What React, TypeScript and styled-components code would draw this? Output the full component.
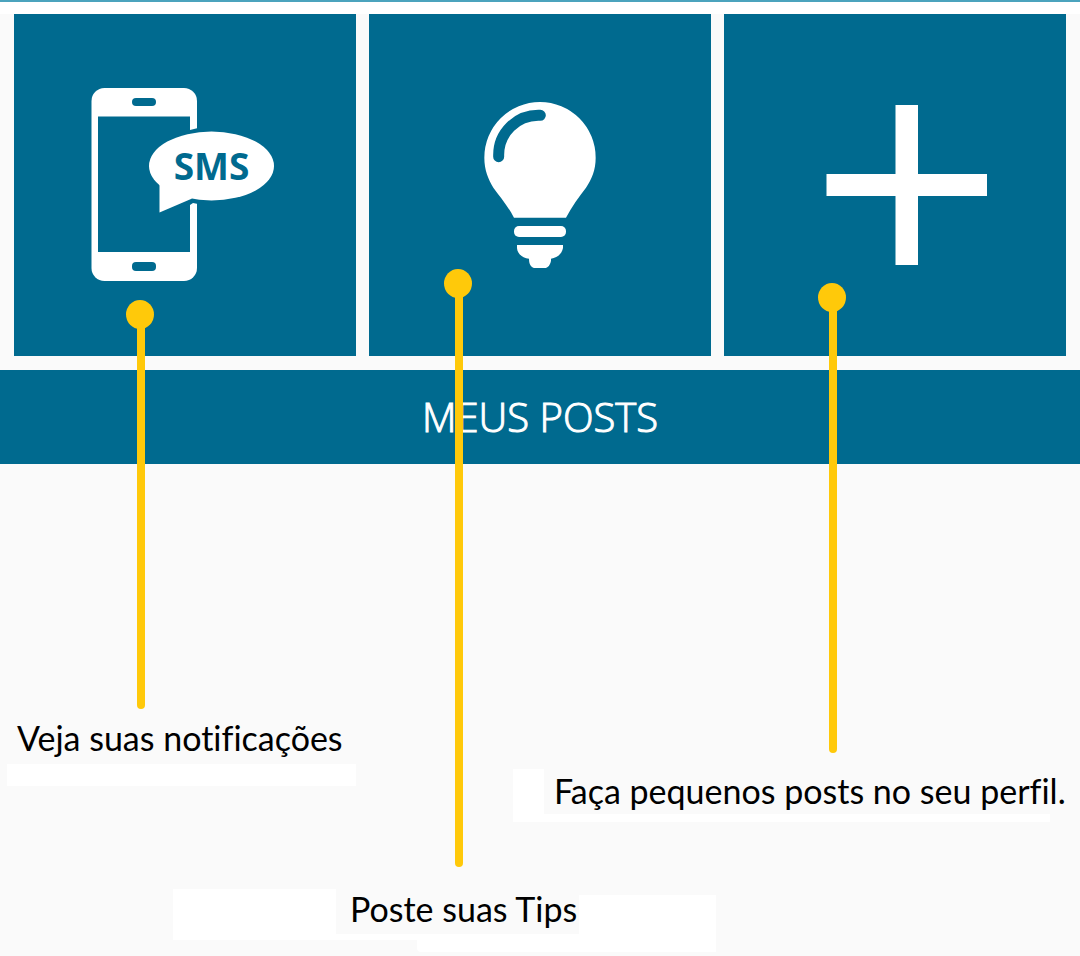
import React from "react";
import styled, { createGlobalStyle } from "styled-components";

const teal = "#006a8f";
const gold = "#ffc90a";
const paper = "#fafafa";

const GlobalStyle = createGlobalStyle`
  * { box-sizing: border-box; }
  body {
    margin: 0;
    background: ${paper};
    color: #000;
    font-family: Lato, "Liberation Sans", sans-serif;
  }
`;

const Page = styled.main`
  overflow: hidden;
`;

const TopEdge = styled.div`
  height: 14px;
  border-top: 2px solid #4ba3bd;
  background: #fff;
`;

const Tiles = styled.ul`
  display: grid;
  grid-template-columns: repeat(3, 1fr);
  gap: 13px;
  margin: 0;
  padding: 0 14px 14px;
  list-style: none;
`;

const TileItem = styled.li`
  position: relative;
`;

const TileButton = styled.button`
  display: block;
  width: 100%;
  aspect-ratio: 1;
  padding: 0;
  border: 0;
  background: ${teal};
  color: #fff;
  cursor: pointer;
`;

const TileArt = styled.svg`
  display: block;
  width: 100%;
  height: 100%;
`;

const Pin = styled.span<{ $left: number; $top: number; $length: number }>`
  position: absolute;
  z-index: 1;
  left: ${(p) => p.$left}px;
  top: ${(p) => p.$top}px;
  width: 28px;
  height: ${(p) => p.$length}px;
  pointer-events: none;

  &::before {
    content: "";
    display: block;
    height: 29px;
    border-radius: 50%;
    background: ${gold};
  }

  &::after {
    content: "";
    display: block;
    width: 8px;
    height: calc(100% - 25px);
    margin: -4px 0 0 11px;
    border-radius: 0 0 4px 4px;
    background: ${gold};
  }
`;

const Band = styled.h2`
  display: flex;
  align-items: center;
  justify-content: center;
  height: 94px;
  margin: 0;
  background: ${teal};
  color: #fff;
  font-family: "Open Sans", "Noto Sans", sans-serif;
  font-size: 40px;
  font-weight: 300;
  line-height: 48px;
  -webkit-text-stroke: 1px #fff;
`;

const Notes = styled.section`
  padding: 252px 16px 4px 7px;
`;

const NoteRow = styled.div`
  display: flex;
  justify-content: space-between;
  align-items: flex-start;
`;

const NoteText = styled.p`
  margin: 0;
  padding-bottom: 2px;
  font-size: 34px;
  font-variant-ligatures: none;
  line-height: 43px;
  white-space: nowrap;
`;

const FirstNote = styled.div`
  width: 349px;
  border-bottom: 22px solid #fff;

  ${NoteText} {
    padding: 0 0 5px 10px;
  }
`;

const PostNote = styled.div`
  width: 551px;
  margin-top: 53px;
  padding-right: 14px;
`;

const PostPatch = styled.div`
  padding: 0 0 8px 31px;
  background: #fff;

  ${NoteText} {
    padding-left: 10px;
    background: ${paper};
  }
`;

const TipsNote = styled.div`
  display: grid;
  grid-template-columns: 163px 243px 137px;
  width: 543px;
  margin: 67px 0 0 166px;
`;

const LeftPatch = styled.div`
  height: 51px;
  background: #fff;
`;

const RightPatch = styled.div`
  height: 57px;
  margin-top: 6px;
  background: #fff;
`;

const TipsText = styled.div`
  ${NoteText} {
    padding: 0 0 6px 14px;
    line-height: 39px;
  }
`;

const PatchSteps = styled.div`
  display: flex;
  align-items: flex-start;

  &::before {
    content: "";
    width: 81px;
    height: 6px;
    background: #fff;
  }

  &::after {
    content: "";
    flex: 1;
    height: 18px;
    border-radius: 0 0 0 4px;
    background: #fff;
  }
`;

function SmsArt() {
  return (
    <TileArt viewBox="0 0 342 342" aria-hidden="true">
      <rect x="77.500" y="74" width="105.500" height="193" rx="13" fill="#fff" />
      <rect x="84" y="102.500" width="92" height="135.500" fill={teal} />
      <rect x="118" y="84" width="24" height="8" rx="4" fill={teal} />
      <rect x="118" y="248" width="24" height="9" rx="4" fill={teal} />
      <path d="M176 116 L184 114 V190 L179 189 L176 191 Z" fill={teal} />
      <ellipse cx="197.500" cy="152" rx="62.500" ry="34.500" fill="#fff" />
      <path d="M139 161 Q140 166 145.500 170 V198.500 L177 185 L187 175 Z" fill="#fff" />
      <text
        x="197.500"
        y="166"
        fill={teal}
        fontFamily="'Open Sans', 'Noto Sans', sans-serif"
        fontSize="37"
        fontWeight="700"
        textAnchor="middle"
      >
        SMS
      </text>
    </TileArt>
  );
}

function BulbArt() {
  return (
    <TileArt viewBox="0 0 342 342" aria-hidden="true">
      <g transform="translate(61 76) scale(.33333)" fill="#fff">
        <path d="M252 383 C235 350 210 320 190 293 C175 268 163 240 163 203 A167 167 0 0 1 497 203 C497 240 485 268 468 293 C447 320 425 350 408 383 Z" />
        <path
          d="M206 200 V195 A119 119 0 0 1 325 76 H331"
          fill="none"
          stroke={teal}
          strokeWidth="33"
          strokeLinecap="round"
        />
        <rect x="252" y="408" width="156" height="33" rx="15" />
        <path d="M261 465 H399 V474 C396 490 383 504 363 506 V512 C361 524 354 534 344 534 H316 C305 534 297 525 297 506 C278 504 262 492 261 474 Z" />
      </g>
    </TileArt>
  );
}

function PlusArt() {
  return (
    <TileArt viewBox="0 0 342 342" aria-hidden="true">
      <path d="M171.500 91 h22.500 v69 h69 v22 h-69 v69 h-22.500 v-69 h-69 v-22 h69 Z" fill="#fff" />
    </TileArt>
  );
}

export default function App() {
  return (
    <>
      <GlobalStyle />
      <Page>
        <TopEdge />
        <Tiles>
          <TileItem>
            <TileButton type="button" aria-label="Notificações">
              <SmsArt />
            </TileButton>
            <Pin $left={112} $top={286} $length={409} />
          </TileItem>
          <TileItem>
            <TileButton type="button" aria-label="Tips">
              <BulbArt />
            </TileButton>
            <Pin $left={75} $top={255} $length={598} />
          </TileItem>
          <TileItem>
            <TileButton type="button" aria-label="Novo post">
              <PlusArt />
            </TileButton>
            <Pin $left={94} $top={269} $length={470} />
          </TileItem>
        </Tiles>
        <Band>MEUS POSTS</Band>
        <Notes>
          <NoteRow>
            <FirstNote>
              <NoteText>Veja suas notificações</NoteText>
            </FirstNote>
            <PostNote>
              <PostPatch>
                <NoteText>Faça pequenos posts no seu perfil.</NoteText>
              </PostPatch>
            </PostNote>
          </NoteRow>
          <TipsNote>
            <LeftPatch />
            <TipsText>
              <NoteText>Poste suas Tips</NoteText>
              <PatchSteps />
            </TipsText>
            <RightPatch />
          </TipsNote>
        </Notes>
      </Page>
    </>
  );
}
